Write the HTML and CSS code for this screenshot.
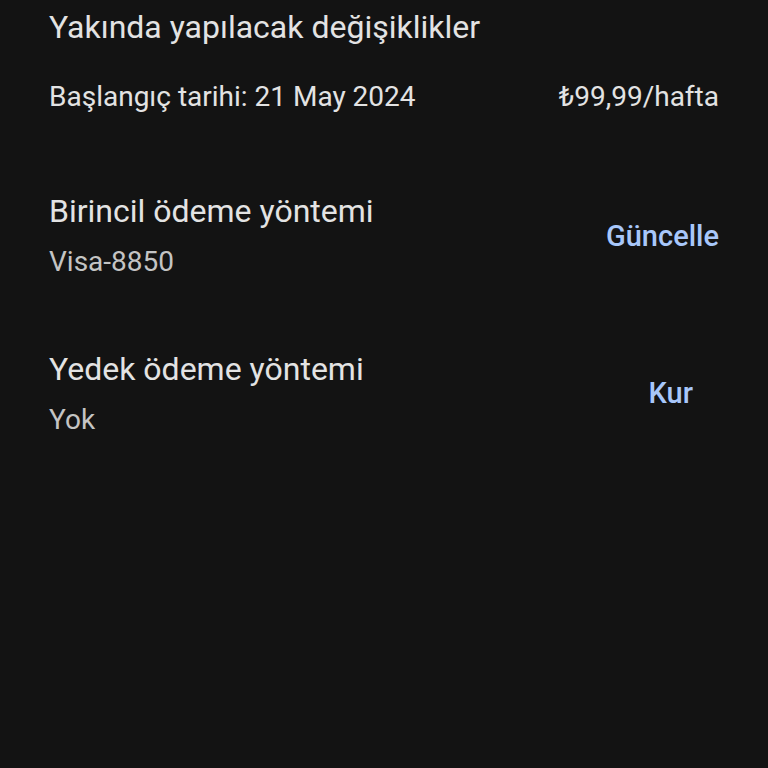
FILE: index.html
```html
<!DOCTYPE html>
<html lang="tr">
<head>
<meta charset="utf-8">
<link rel="stylesheet" href="styles.css">
</head>
<body>
<div class="page">
  <h1 class="title">Yakında yapılacak değişiklikler</h1>
  <div class="row price-row">
    <span class="text">Başlangıç tarihi: 21 May 2024</span>
    <span class="text">₺99,99/hafta</span>
  </div>
  <div class="row method">
    <div class="col">
      <div class="label">Birincil ödeme yöntemi</div>
      <div class="sub">Visa-8850</div>
    </div>
    <span class="action update">Güncelle</span>
  </div>
  <div class="row method">
    <div class="col">
      <div class="label">Yedek ödeme yöntemi</div>
      <div class="sub">Yok</div>
    </div>
    <span class="action setup">Kur</span>
  </div>
</div>
</body>
</html>
```
FILE: styles.css
```css
html, body {
  margin: 0;
  padding: 0;
  background: #131313;
  height: 100%;
}
body {
  font-family: Roboto, "Noto Sans", sans-serif;
  color: #e3e3e3;
}
.page {
  padding: 6px 49px 0 49px;
}
.title {
  margin: 0;
  font-size: 32px;
  font-weight: 400;
  line-height: 42px;
}
.row {
  display: flex;
  justify-content: space-between;
  align-items: center;
}
.price-row {
  margin-top: 31px;
  font-size: 28px;
  line-height: 36px;
}
.method {
  margin-top: 76px;
}
.method + .method {
  margin-top: 70px;
}
.col {
  display: flex;
  flex-direction: column;
  gap: 14px;
}
.label {
  font-size: 32px;
  line-height: 40px;
}
.sub {
  font-size: 28px;
  line-height: 34px;
  color: #c4c4c4;
}
.action {
  font-size: 29px;
  font-weight: 500;
  line-height: 36px;
  color: #a8c7fa;
}
.update {
  margin-top: 2px;
}
.setup {
  margin-top: 0;
  margin-right: 26px;
}
```
